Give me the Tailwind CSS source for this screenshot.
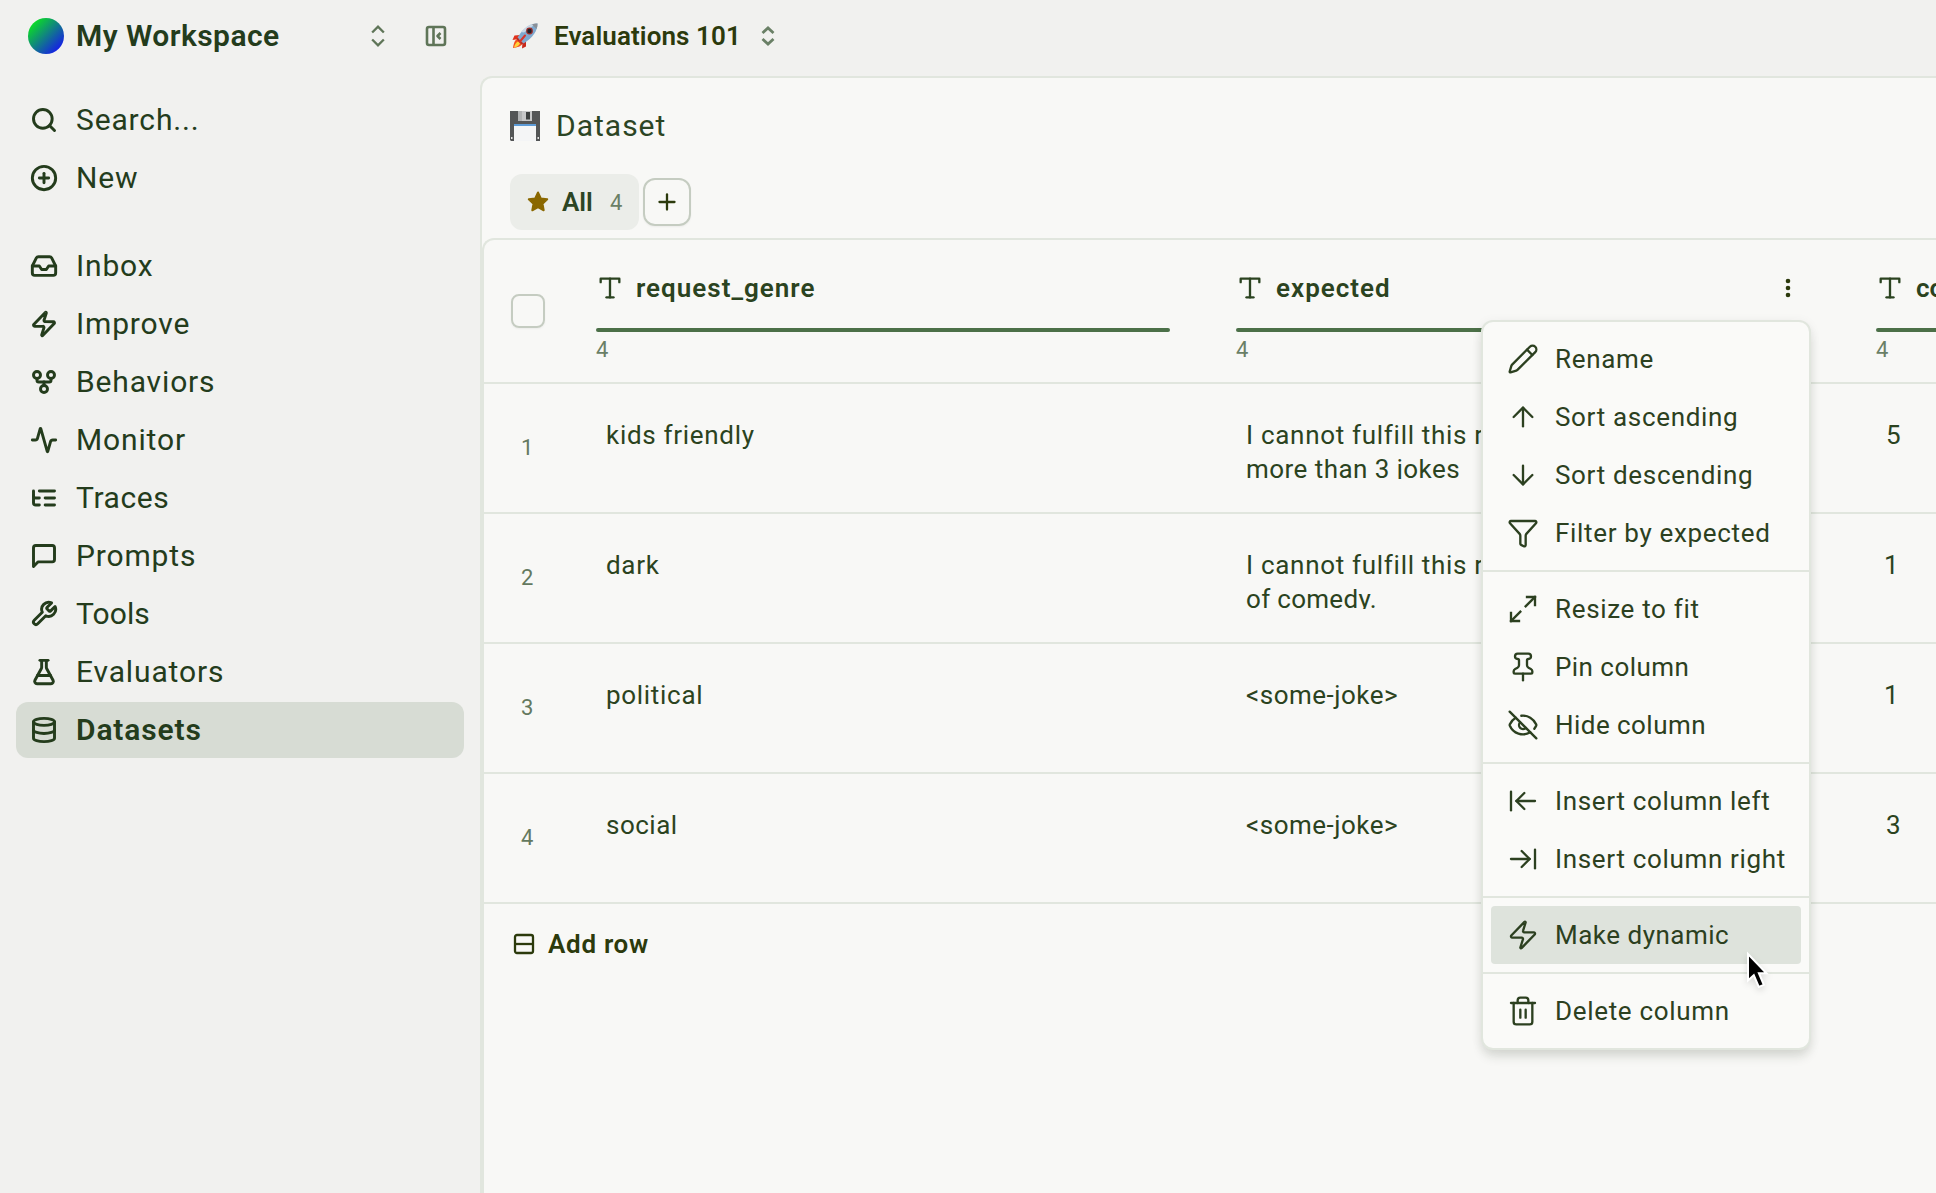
<!DOCTYPE html>
<html lang="en">
<head>
  <meta charset="UTF-8">
  <title>Evaluations 101 - Dataset</title>
  <script src="https://cdn.jsdelivr.net/npm/@tailwindcss/browser@4"></script>
</head>
<body class="bg-[#f1f1ef] w-[1936px] h-[1193px] overflow-hidden font-[Roboto,sans-serif] text-[#243c1c]">
  <div class="flex w-full h-full">

    <!-- Sidebar -->
    <aside class="w-[480px] shrink-0 px-4 text-[30px] leading-none tracking-[0.85px]">
      <div class="flex items-center h-[72px] pl-3 pr-4">
        <div class="size-9 rounded-full bg-linear-135/srgb from-[#0be61c] from-10% to-[#1616f0] to-90%"></div>
        <span class="ml-3 font-semibold tracking-[0.45px]">My Workspace</span>
        <svg class="size-7 ml-auto text-[#5f7558]" viewBox="0 0 24 24" fill="none" stroke="currentColor" stroke-width="2"><path d="m7 15 5 5 5-5"/><path d="m7 9 5-5 5 5"/></svg>
        <svg class="size-6 ml-8 text-[#5f7558]" viewBox="0 0 24 24" fill="none" stroke="currentColor" stroke-width="2.6" stroke-linejoin="round"><rect x="3" y="3" width="18" height="18" rx="2"/><path d="M9.500 3v18"/><path d="m16.500 15-3-3 3-3"/></svg>
      </div>

      <nav class="flex flex-col gap-0.5 mt-5">
        <a class="flex items-center gap-[18px] h-14 px-3.5 rounded-xl">
          <svg class="size-7" viewBox="0 0 24 24" fill="none" stroke="currentColor" stroke-width="2.5" stroke-linecap="round" stroke-linejoin="round"><circle cx="11" cy="11" r="8"/><path d="m21 21-4.3-4.3"/></svg>
          <span>Search...</span>
        </a>
        <a class="flex items-center gap-[18px] h-14 px-3.5 rounded-xl">
          <svg class="size-7" viewBox="0 0 24 24" fill="none" stroke="currentColor" stroke-width="2.5" stroke-linecap="round" stroke-linejoin="round"><circle cx="12" cy="12" r="10"/><path d="M8 12h8"/><path d="M12 8v8"/></svg>
          <span>New</span>
        </a>
      </nav>

      <nav class="flex flex-col gap-0.5 mt-8">
        <a class="flex items-center gap-[18px] h-14 px-3.5 rounded-xl">
          <svg class="size-7" viewBox="0 0 24 24" fill="none" stroke="currentColor" stroke-width="2.5" stroke-linecap="round" stroke-linejoin="round"><path d="M22 12h-6l-2 3h-4l-2-3H2"/><path d="M5.45 5.11 2 12v6a2 2 0 0 0 2 2h16a2 2 0 0 0 2-2v-6l-3.45-6.89A2 2 0 0 0 16.76 4H7.24a2 2 0 0 0-1.79 1.11z"/></svg>
          <span>Inbox</span>
        </a>
        <a class="flex items-center gap-[18px] h-14 px-3.5 rounded-xl">
          <svg class="size-7" viewBox="0 0 24 24" fill="none" stroke="currentColor" stroke-width="2.5" stroke-linecap="round" stroke-linejoin="round"><path d="M4 14a1 1 0 0 1-.78-1.63l9.9-10.2a.5.5 0 0 1 .86.46l-1.92 6.02A1 1 0 0 0 13 10h7a1 1 0 0 1 .78 1.63l-9.9 10.2a.5.5 0 0 1-.86-.46l1.92-6.02A1 1 0 0 0 11 14z"/></svg>
          <span>Improve</span>
        </a>
        <a class="flex items-center gap-[18px] h-14 px-3.5 rounded-xl">
          <svg class="size-7" viewBox="0 0 24 24" fill="none" stroke="currentColor" stroke-width="2.5" stroke-linecap="round" stroke-linejoin="round"><circle cx="6" cy="6" r="3"/><circle cx="18" cy="6" r="3"/><circle cx="12" cy="18" r="3"/><path d="M6 9v1.500a1.500 1.500 0 0 0 1.500 1.500h9a1.500 1.500 0 0 0 1.500-1.500V9"/><path d="M12 12v3"/></svg>
          <span>Behaviors</span>
        </a>
        <a class="flex items-center gap-[18px] h-14 px-3.5 rounded-xl">
          <svg class="size-7" viewBox="0 0 24 24" fill="none" stroke="currentColor" stroke-width="2.5" stroke-linecap="round" stroke-linejoin="round"><path d="M22 12h-2.480a2 2 0 0 0-1.930 1.460l-2.350 8.360a.25.25 0 0 1-.48 0L9.240 2.180a.25.25 0 0 0-.48 0l-2.350 8.360A2 2 0 0 1 4.490 12H2"/></svg>
          <span>Monitor</span>
        </a>
        <a class="flex items-center gap-[18px] h-14 px-3.5 rounded-xl">
          <svg class="size-7" viewBox="0 0 24 24" fill="none" stroke="currentColor" stroke-width="2.5" stroke-linecap="round" stroke-linejoin="round"><path d="M21 12h-8"/><path d="M21 6H8"/><path d="M21 18h-8"/><path d="M3 6v4c0 1.100.9 2 2 2h3"/><path d="M3 10v6c0 1.100.9 2 2 2h3"/></svg>
          <span class="tracking-[0.6px]">Traces</span>
        </a>
        <a class="flex items-center gap-[18px] h-14 px-3.5 rounded-xl">
          <svg class="size-7" viewBox="0 0 24 24" fill="none" stroke="currentColor" stroke-width="2.5" stroke-linecap="round" stroke-linejoin="round"><path d="M21 15a2 2 0 0 1-2 2H7l-4 4V5a2 2 0 0 1 2-2h14a2 2 0 0 1 2 2z"/></svg>
          <span>Prompts</span>
        </a>
        <a class="flex items-center gap-[18px] h-14 px-3.5 rounded-xl">
          <svg class="size-7" viewBox="0 0 24 24" fill="none" stroke="currentColor" stroke-width="2.5" stroke-linecap="round" stroke-linejoin="round"><path d="M14.700 6.300a1 1 0 0 0 0 1.400l1.600 1.600a1 1 0 0 0 1.400 0l3.770-3.770a6 6 0 0 1-7.940 7.940l-6.910 6.910a2.120 2.120 0 0 1-3-3l6.910-6.910a6 6 0 0 1 7.940-7.940l-3.760 3.760z"/></svg>
          <span class="tracking-[0.1px]">Tools</span>
        </a>
        <a class="flex items-center gap-[18px] h-14 px-3.5 rounded-xl">
          <svg class="size-7" viewBox="0 0 24 24" fill="none" stroke="currentColor" stroke-width="2.5" stroke-linecap="round" stroke-linejoin="round"><path d="M14 2v6a2 2 0 0 0 .245.960l5.510 10.080A2 2 0 0 1 18 22H6a2 2 0 0 1-1.755-2.960l5.510-10.080A2 2 0 0 0 10 8V2"/><path d="M6.453 15h11.094"/><path d="M8.500 2h7"/></svg>
          <span>Evaluators</span>
        </a>
        <a class="flex items-center gap-[18px] h-14 px-3.5 rounded-xl bg-[#d7dcd4]">
          <svg class="size-7" viewBox="0 0 24 24" fill="none" stroke="currentColor" stroke-width="2.5" stroke-linecap="round" stroke-linejoin="round"><ellipse cx="12" cy="5" rx="9" ry="3"/><path d="M3 5v14a9 3 0 0 0 18 0V5"/><path d="M3 12a9 3 0 0 0 18 0"/></svg>
          <span class="font-semibold">Datasets</span>
        </a>
      </nav>
    </aside>

    <main class="flex-1 min-w-0 flex flex-col">
      <!-- Top bar -->
      <header class="flex items-center h-[76px] shrink-0 pl-8 pb-1 text-[26px] text-[#2c3a0c]">
        <svg class="size-[26px]" viewBox="0 0 26 26">
          <path d="M8 12 2.500 12.500 0.500 17l6-1z" fill="#e0321c"/>
          <path d="M14 18v5.500l-4 2 .5-6z" fill="#c9281b"/>
          <path d="M6 15.500C2.500 17 1.500 21 1 25c4-.5 8.500-1.500 9.500-5z" fill="#f4511e"/>
          <path d="M6 18.500C3.800 19.500 2.500 22 2 24.500c2.500-.5 5-1.500 6-4z" fill="#ffd43b"/>
          <path d="M25.500.5C18 .5 12 4.500 5.500 14.500l6 6C21 14.500 25.500 8 25.500.5z" fill="#7fa9cf"/>
          <path d="M25.500.5C19 .5 14 3 9 9l3 .5L23 1.500z" fill="#c8d8e6"/>
          <path d="M25.500.5c-2 0-4 .3-5.500.9l4.500 4.600c.7-1.600 1-3.500 1-5.500z" fill="#8a9097"/>
          <circle cx="17.500" cy="8" r="3.400" fill="#9b2d2a"/>
          <circle cx="17.500" cy="8" r="2.200" fill="#20232a"/>
          <path d="M5.500 14.500 11.500 20.500 9.500 21.500 4.700 16.500z" fill="#b5302a"/>
          <path d="M13 12.500 8 18.500" stroke="#d8352a" stroke-width="2" stroke-linecap="round"/>
        </svg>
        <span class="ml-4 font-semibold tracking-[0.1px]">Evaluations 101</span>
        <svg class="size-6 ml-[15px] text-[#6a8066]" viewBox="0 0 24 24" fill="none" stroke="currentColor" stroke-width="2.8"><path d="m6.500 15 5.500 5 5.500-5"/><path d="m6.500 9 5.500-5 5.500 5"/></svg>
      </header>

      <section class="flex-1 flex flex-col bg-[#f8f8f6] border-l-2 border-t-2 border-[#e1e6de] rounded-tl-xl">
        <div class="flex items-center h-24 shrink-0 pl-7 text-[#2c4524]">
          <svg class="size-[30px]" viewBox="0 0 30 30">
            <path d="M0 0h30v30H1l-1-1z" fill="#535556"/>
            <path d="M8 0h14v10H8z" fill="#c6c7c8"/>
            <path d="M8 0h4v10H8z" fill="#b0b2b3"/>
            <path d="M16 1h4v7.500h-4z" fill="#3d4040"/>
            <path d="M4 13h22v17H4z" fill="#f4f5f6"/>
            <path d="M4 13h22v2H4z" fill="#5c9ad6"/>
            <path d="M1 26h1.500v2H1zM27.500 26H29v2h-1.500z" fill="#e4e4e4"/>
          </svg>
          <span class="ml-4 pb-0.5 text-[30px] tracking-[1px]">Dataset</span>
        </div>

        <!-- View tabs -->
        <div class="flex items-center gap-1 h-14 shrink-0 pl-7">
          <div class="flex items-center w-[129px] h-14 pl-4 rounded-xl bg-[#ebede9] text-[#2c4524]">
            <svg class="size-6 text-[#8a6800]" viewBox="0 0 24 24" fill="currentColor" stroke="currentColor" stroke-width="2" stroke-linejoin="round"><path d="m12 2.500 2.800 5.900 6.400.9-4.700 4.500 1.200 6.500L12 17.200l-5.700 3.100 1.200-6.500-4.700-4.500 6.400-.9z"/></svg>
            <span class="ml-3 text-[26px] font-semibold">All</span>
            <span class="ml-[17px] text-[22px] text-[#6a7f66]">4</span>
          </div>
          <button class="flex items-center justify-center size-12 rounded-xl border-2 border-[#c5ccc1] text-[#2c3a0c] shadow-xs">
            <svg class="size-6" viewBox="0 0 24 24" fill="none" stroke="currentColor" stroke-width="2.300" stroke-linecap="round"><path d="M4.500 12h15"/><path d="M12 4.500v15"/></svg>
          </button>
        </div>

        <!-- Table -->
        <div class="flex-1 mt-2 border-l-2 border-t-2 border-[#e1e6de] rounded-tl-xl overflow-hidden text-[26px] text-[#2b4320]">
          <div class="flex h-36 w-[2064px] border-b-2 border-[#e1e6de]">
            <div class="w-[112px] shrink-0 pl-[27px] pt-[54px]">
              <div class="size-[34px] rounded-lg border-2 border-[#c5ccc1] shadow-xs"></div>
            </div>
            <div class="w-[640px] shrink-0 pt-[30px]">
              <div class="flex items-center gap-3 h-9">
                <svg class="size-7" viewBox="0 0 24 24" fill="none" stroke="currentColor" stroke-width="2" stroke-linecap="round" stroke-linejoin="round"><path d="M4 7V4h16v3"/><path d="M9 20h6"/><path d="M12 4v16"/></svg>
                <span class="font-semibold tracking-[1px]">request_genre</span>
              </div>
              <div class="w-[574px] h-1 mt-[22px] rounded-xs bg-[#4c7048]"></div>
              <div class="mt-1 text-[22px] leading-[27px] text-[#6a7f66]">4</div>
            </div>
            <div class="w-[640px] shrink-0 pt-[30px]">
              <div class="flex items-center gap-3 h-9">
                <svg class="size-7" viewBox="0 0 24 24" fill="none" stroke="currentColor" stroke-width="2" stroke-linecap="round" stroke-linejoin="round"><path d="M4 7V4h16v3"/><path d="M9 20h6"/><path d="M12 4v16"/></svg>
                <span class="font-semibold tracking-[1px]">expected</span>
                <svg class="size-6 ml-auto mr-[76px] text-[#2c3a0c]" viewBox="0 0 24 24" fill="currentColor"><circle cx="12" cy="5" r="2.300"/><circle cx="12" cy="12" r="2.300"/><circle cx="12" cy="19" r="2.300"/></svg>
              </div>
              <div class="w-[574px] h-1 mt-[22px] rounded-xs bg-[#4c7048]"></div>
              <div class="mt-1 text-[22px] leading-[27px] text-[#6a7f66]">4</div>
            </div>
            <div class="w-[640px] shrink-0 pt-[30px]">
              <div class="flex items-center gap-3 h-9">
                <svg class="size-7" viewBox="0 0 24 24" fill="none" stroke="currentColor" stroke-width="2" stroke-linecap="round" stroke-linejoin="round"><path d="M4 7V4h16v3"/><path d="M9 20h6"/><path d="M12 4v16"/></svg>
                <span class="font-semibold">count</span>
              </div>
              <div class="w-[574px] h-1 mt-[22px] rounded-xs bg-[#4c7048]"></div>
              <div class="mt-1 text-[22px] leading-[27px] text-[#6a7f66]">4</div>
            </div>
          </div>

          <div class="flex h-[130px] w-[2064px] border-b-2 border-[#e1e6de] leading-[34px] tracking-[0.7px]">
            <div class="w-[112px] shrink-0 flex items-center pl-[37px] text-[22px] text-[#64795f]">1</div>
            <div class="w-[640px] shrink-0 pl-2.5 pt-[34px]">kids friendly</div>
            <div class="w-[640px] shrink-0 pl-2.5 pt-[34px]"><div class="h-[61px] overflow-hidden">I cannot fulfill this request for<br><span class="tracking-[0.45px]">more than 3 jokes</span></div></div>
            <div class="w-[640px] shrink-0 pl-2.5 pt-[34px]">5</div>
          </div>
          <div class="flex h-[130px] w-[2064px] border-b-2 border-[#e1e6de] leading-[34px] tracking-[0.7px]">
            <div class="w-[112px] shrink-0 flex items-center pl-[37px] text-[22px] text-[#64795f]">2</div>
            <div class="w-[640px] shrink-0 pl-2.5 pt-[34px]">dark</div>
            <div class="w-[640px] shrink-0 pl-2.5 pt-[34px]"><div class="h-[61px] overflow-hidden">I cannot fulfill this request for<br><span class="tracking-[0.3px]">of comedy.</span></div></div>
            <div class="w-[640px] shrink-0 pl-2 pt-[34px]">1</div>
          </div>
          <div class="flex h-[130px] w-[2064px] border-b-2 border-[#e1e6de] leading-[34px] tracking-[0.7px]">
            <div class="w-[112px] shrink-0 flex items-center pl-[37px] text-[22px] text-[#64795f]">3</div>
            <div class="w-[640px] shrink-0 pl-2.5 pt-[34px]">political</div>
            <div class="w-[640px] shrink-0 pl-2.5 pt-[34px] tracking-[0.5px]">&lt;some-joke&gt;</div>
            <div class="w-[640px] shrink-0 pl-2 pt-[34px]">1</div>
          </div>
          <div class="flex h-[130px] w-[2064px] border-b-2 border-[#e1e6de] leading-[34px] tracking-[0.7px]">
            <div class="w-[112px] shrink-0 flex items-center pl-[37px] text-[22px] text-[#64795f]">4</div>
            <div class="w-[640px] shrink-0 pl-2.5 pt-[34px] tracking-[0.5px]">social</div>
            <div class="w-[640px] shrink-0 pl-2.5 pt-[34px] tracking-[0.5px]">&lt;some-joke&gt;</div>
            <div class="w-[640px] shrink-0 pl-2.5 pt-[34px]">3</div>
          </div>

          <button class="flex items-center gap-3 h-20 pl-7 font-semibold tracking-[0.7px] text-[#2c3a0c]">
            <svg class="size-6" viewBox="0 0 24 24" fill="none" stroke="currentColor" stroke-width="2.300" stroke-linejoin="round"><rect x="3" y="3" width="18" height="18" rx="2"/><path d="M3 12h18"/></svg>
            <span>Add row</span>
          </button>
        </div>
      </section>
    </main>
  </div>

  <!-- Column menu -->
  <div class="absolute left-[1481px] top-[320px] w-[330px] rounded-xl border-2 border-[#e1e6de] bg-[#fafaf8] text-[26px] leading-none text-[#2c4020] tracking-[0.67px] shadow-[0_8px_12px_-2px_rgba(30,40,20,0.14),0_2px_12px_rgba(30,40,20,0.06)]">
    <div class="p-2">
      <div class="flex items-center gap-4 h-[58px] px-4 whitespace-nowrap">
        <svg class="size-8 shrink-0" viewBox="0 0 24 24" fill="none" stroke="currentColor" stroke-width="1.750" stroke-linecap="round" stroke-linejoin="round"><path d="M21.174 6.812a1 1 0 0 0-3.986-3.987L3.842 16.174a2 2 0 0 0-.5.830l-1.321 4.352a.5.5 0 0 0 .623.622l4.353-1.320a2 2 0 0 0 .830-.497z"/><path d="m15 5 4 4"/></svg>
        <span>Rename</span>
      </div>
      <div class="flex items-center gap-4 h-[58px] px-4 whitespace-nowrap">
        <svg class="size-8 shrink-0" viewBox="0 0 24 24" fill="none" stroke="currentColor" stroke-width="1.750" stroke-linecap="round" stroke-linejoin="round"><path d="m5 12 7-7 7 7"/><path d="M12 19V5"/></svg>
        <span>Sort ascending</span>
      </div>
      <div class="flex items-center gap-4 h-[58px] px-4 whitespace-nowrap">
        <svg class="size-8 shrink-0" viewBox="0 0 24 24" fill="none" stroke="currentColor" stroke-width="1.750" stroke-linecap="round" stroke-linejoin="round"><path d="M12 5v14"/><path d="m19 12-7 7-7-7"/></svg>
        <span>Sort descending</span>
      </div>
      <div class="flex items-center gap-4 h-[58px] px-4 whitespace-nowrap">
        <svg class="size-8 shrink-0" viewBox="0 0 24 24" fill="none" stroke="currentColor" stroke-width="1.750" stroke-linecap="round" stroke-linejoin="round"><path d="M10 20a1 1 0 0 0 .553.895l2 1A1 1 0 0 0 14 21v-7a2 2 0 0 1 .517-1.341L21.740 4.670A1 1 0 0 0 21 3H3a1 1 0 0 0-.742 1.670l7.225 7.989A2 2 0 0 1 10 14z"/></svg>
        <span>Filter by expected</span>
      </div>
    </div>
    <div class="p-2 border-t-2 border-[#e1e6de]">
      <div class="flex items-center gap-4 h-[58px] px-4 whitespace-nowrap">
        <svg class="size-8 shrink-0" viewBox="0 0 24 24" fill="none" stroke="currentColor" stroke-width="1.750" stroke-linecap="square"><path d="M15 3h6v6"/><path d="m21 3-7 7"/><path d="m3 21 7-7"/><path d="M9 21H3v-6"/></svg>
        <span>Resize to fit</span>
      </div>
      <div class="flex items-center gap-4 h-[58px] px-4 whitespace-nowrap">
        <svg class="size-8 shrink-0" viewBox="0 0 24 24" fill="none" stroke="currentColor" stroke-width="1.750" stroke-linecap="round" stroke-linejoin="round"><path d="M12 17v5"/><path d="M9 10.760a2 2 0 0 1-1.110 1.790l-1.780.9A2 2 0 0 0 5 15.240V16a1 1 0 0 0 1 1h12a1 1 0 0 0 1-1v-.76a2 2 0 0 0-1.110-1.790l-1.780-.9A2 2 0 0 1 15 10.760V7a1 1 0 0 1 1-1 2 2 0 0 0 0-4H8a2 2 0 0 0 0 4 1 1 0 0 1 1 1z"/></svg>
        <span class="tracking-[0.45px]">Pin column</span>
      </div>
      <div class="flex items-center gap-4 h-[58px] px-4 whitespace-nowrap">
        <svg class="size-8 shrink-0" viewBox="0 0 24 24" fill="none" stroke="currentColor" stroke-width="1.750" stroke-linecap="round" stroke-linejoin="round"><path d="M10.733 5.076a10.744 10.744 0 0 1 11.205 6.575 1 1 0 0 1 0 .696 10.747 10.747 0 0 1-1.444 2.490"/><path d="M14.084 14.158a3 3 0 0 1-4.242-4.242"/><path d="M17.479 17.499a10.750 10.750 0 0 1-15.417-5.151 1 1 0 0 1 0-.696 10.750 10.750 0 0 1 4.446-5.143"/><path d="m2 2 20 20"/></svg>
        <span class="tracking-[0.45px]">Hide column</span>
      </div>
    </div>
    <div class="p-2 border-t-2 border-[#e1e6de]">
      <div class="flex items-center gap-4 h-[58px] px-4 whitespace-nowrap">
        <svg class="size-8 shrink-0" viewBox="0 0 24 24" fill="none" stroke="currentColor" stroke-width="1.750" stroke-linecap="round" stroke-linejoin="round"><path d="M3 19V5"/><path d="m13 6-6 6 6 6"/><path d="M7 12h14"/></svg>
        <span>Insert column left</span>
      </div>
      <div class="flex items-center gap-4 h-[58px] px-4 whitespace-nowrap">
        <svg class="size-8 shrink-0" viewBox="0 0 24 24" fill="none" stroke="currentColor" stroke-width="1.750" stroke-linecap="round" stroke-linejoin="round"><path d="M17 12H3"/><path d="m11 18 6-6-6-6"/><path d="M21 5v14"/></svg>
        <span>Insert column right</span>
      </div>
    </div>
    <div class="p-2 border-t-2 border-[#e1e6de]">
      <div class="flex items-center gap-4 h-[58px] px-4 whitespace-nowrap rounded bg-[#dee3dc]">
        <svg class="size-8 shrink-0" viewBox="0 0 24 24" fill="none" stroke="currentColor" stroke-width="1.750" stroke-linecap="round" stroke-linejoin="round"><path d="M4 14a1 1 0 0 1-.78-1.630l9.900-10.200a.5.5 0 0 1 .860.460l-1.920 6.020A1 1 0 0 0 13 10h7a1 1 0 0 1 .780 1.630l-9.900 10.200a.5.5 0 0 1-.860-.460l1.920-6.020A1 1 0 0 0 11 14z"/></svg>
        <span class="tracking-[0.5px]">Make dynamic</span>
      </div>
    </div>
    <div class="p-2 border-t-2 border-[#e1e6de]">
      <div class="flex items-center gap-4 h-[58px] px-4 whitespace-nowrap">
        <svg class="size-8 shrink-0" viewBox="0 0 24 24" fill="none" stroke="currentColor" stroke-width="1.750" stroke-linecap="round" stroke-linejoin="round"><path d="M3 6h18"/><path d="M19 6v14a2 2 0 0 1-2 2H7a2 2 0 0 1-2-2V6"/><path d="M8 6V4a2 2 0 0 1 2-2h4a2 2 0 0 1 2 2v2"/><path d="M10 11v6"/><path d="M14 11v6"/></svg>
        <span>Delete column</span>
      </div>
    </div>
  </div>

  <!-- Pointer -->
  <svg class="absolute left-[1745px] top-[951px] w-[26px] h-[40px] drop-shadow-md" viewBox="0 0 26 40"><path d="M3 3v26.500l5.800-5.400 5 11.900 5-2.200-4.900-11.600h7.600z" fill="#000" stroke="#fff" stroke-width="2"/></svg>
</body>
</html>
